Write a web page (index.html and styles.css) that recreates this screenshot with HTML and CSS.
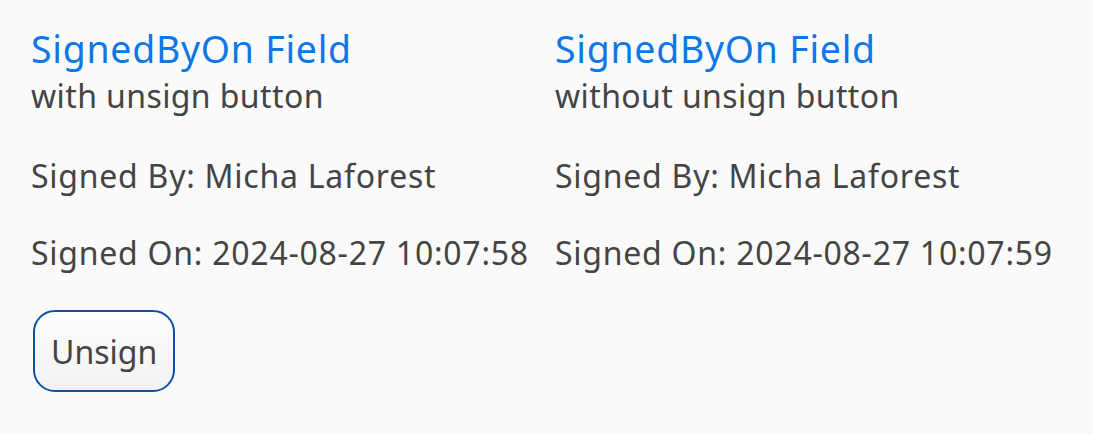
FILE: index.html
```html
<!DOCTYPE html>
<html lang="en">
<head>
<meta charset="utf-8">
<title>SignedByOn Field</title>
<link rel="stylesheet" href="styles.css">
</head>
<body>
<main class="page">
  <section class="field">
    <h3 class="title">SignedByOn Field</h3>
    <div class="subtitle">with unsign button</div>
    <p class="row signed-by">Signed By: Micha Laforest</p>
    <p class="row signed-on">Signed On: 2024-08-27 10:07:58</p>
    <button class="unsign" type="button">Unsign</button>
  </section>
  <section class="field">
    <h3 class="title">SignedByOn Field</h3>
    <div class="subtitle">without unsign button</div>
    <p class="row signed-by">Signed By: Micha Laforest</p>
    <p class="row signed-on">Signed On: 2024-08-27 10:07:59</p>
  </section>
</main>
</body>
</html>
```
FILE: styles.css
```css
html, body {
  margin: 0;
  padding: 0;
  background: #fafafa;
}

body {
  font-family: "Noto Sans", "Open Sans", sans-serif;
  color: #444444;
}

.page {
  display: grid;
  grid-template-columns: 524px 1fr;
  padding: 25px 31px 0 31px;
}

.field {
  display: flex;
  flex-direction: column;
  align-items: flex-start;
}

.title {
  margin: 0;
  font-size: 37.44px;
  font-weight: 400;
  line-height: 47px;
  letter-spacing: 0.75px;
  color: #0d77e6;
}

.subtitle {
  font-size: 32px;
  line-height: 48px;
  letter-spacing: 0.4px;
}

.row {
  margin: 0;
  font-size: 32px;
  line-height: 48px;
  letter-spacing: 0.75px;
  white-space: nowrap;
}

.signed-by {
  margin-top: 32px;
}

.signed-on {
  margin-top: 29px;
}

.unsign {
  margin-top: 33px;
  margin-left: 2px;
  height: 82px;
  padding: 0 16px;
  font-family: "Noto Sans", "Open Sans", sans-serif;
  font-size: 32px;
  color: #444444;
  border: 2px solid #0c4fa3;
  border-radius: 22px;
  background: linear-gradient(#fdfdfd, #f2f2f2);
}
```
